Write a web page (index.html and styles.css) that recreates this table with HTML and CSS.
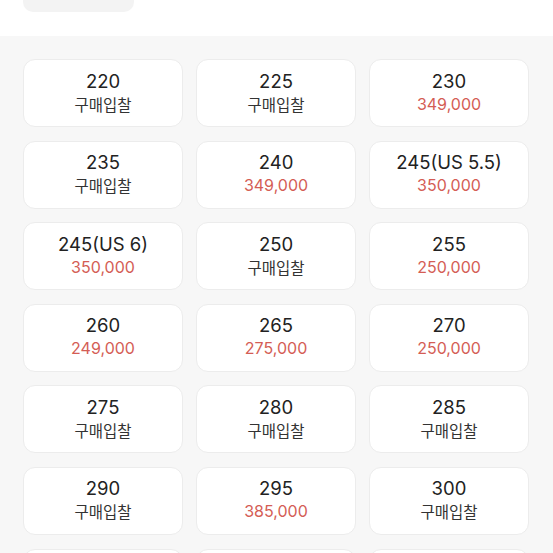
FILE: index.html
```html
<!DOCTYPE html>
<html lang="ko">
<head>
<meta charset="utf-8">
<link rel="stylesheet" href="styles.css">
</head>
<body>
<div class="top">
  <div class="pill"></div>
</div>
<div class="sizes">
  <div class="grid">
    <div class="card"><div class="size">220</div><div class="bid">구매입찰</div></div>
    <div class="card"><div class="size">225</div><div class="bid">구매입찰</div></div>
    <div class="card"><div class="size">230</div><div class="price">349,000</div></div>
    <div class="card"><div class="size">235</div><div class="bid">구매입찰</div></div>
    <div class="card"><div class="size">240</div><div class="price">349,000</div></div>
    <div class="card"><div class="size">245(US 5.5)</div><div class="price">350,000</div></div>
    <div class="card"><div class="size">245(US 6)</div><div class="price">350,000</div></div>
    <div class="card"><div class="size">250</div><div class="bid">구매입찰</div></div>
    <div class="card"><div class="size">255</div><div class="price">250,000</div></div>
    <div class="card"><div class="size">260</div><div class="price">249,000</div></div>
    <div class="card"><div class="size">265</div><div class="price">275,000</div></div>
    <div class="card"><div class="size">270</div><div class="price">250,000</div></div>
    <div class="card"><div class="size">275</div><div class="bid">구매입찰</div></div>
    <div class="card"><div class="size">280</div><div class="bid">구매입찰</div></div>
    <div class="card"><div class="size">285</div><div class="bid">구매입찰</div></div>
    <div class="card"><div class="size">290</div><div class="bid">구매입찰</div></div>
    <div class="card"><div class="size">295</div><div class="price">385,000</div></div>
    <div class="card"><div class="size">300</div><div class="bid">구매입찰</div></div>
    <div class="card"></div>
    <div class="card"></div>
    <div class="card"></div>
  </div>
</div>
</body>
</html>
```

FILE: styles.css
```css
html, body {
  margin: 0;
  padding: 0;
  background: #f7f7f7;
  font-family: Inter, "Noto Sans CJK KR", sans-serif;
  overflow: hidden;
}

.top {
  height: 36px;
  background: #ffffff;
  padding-left: 23px;
  overflow: hidden;
}

.pill {
  width: 111px;
  height: 40px;
  margin-top: -28px;
  border-radius: 10px;
  background: #f3f3f3;
}

.sizes {
  padding: 23px 24px 0 23px;
}

.grid {
  display: grid;
  grid-template-columns: repeat(3, 160px);
  column-gap: 13px;
  row-gap: 13.6px;
}

.card {
  box-sizing: border-box;
  height: 68px;
  background: #ffffff;
  border: 1px solid #ececec;
  border-radius: 12px;
  display: flex;
  flex-direction: column;
  align-items: center;
  justify-content: center;
  padding-bottom: 1px;
}

.size {
  font-size: 18.5px;
  line-height: 23px;
  color: #222222;
}

.bid {
  font-family: "Noto Sans CJK KR", sans-serif;
  font-size: 15.5px;
  line-height: 23px;
  color: #333333;
}

.price {
  font-size: 16px;
  line-height: 23px;
  color: #d45d55;
}
```
